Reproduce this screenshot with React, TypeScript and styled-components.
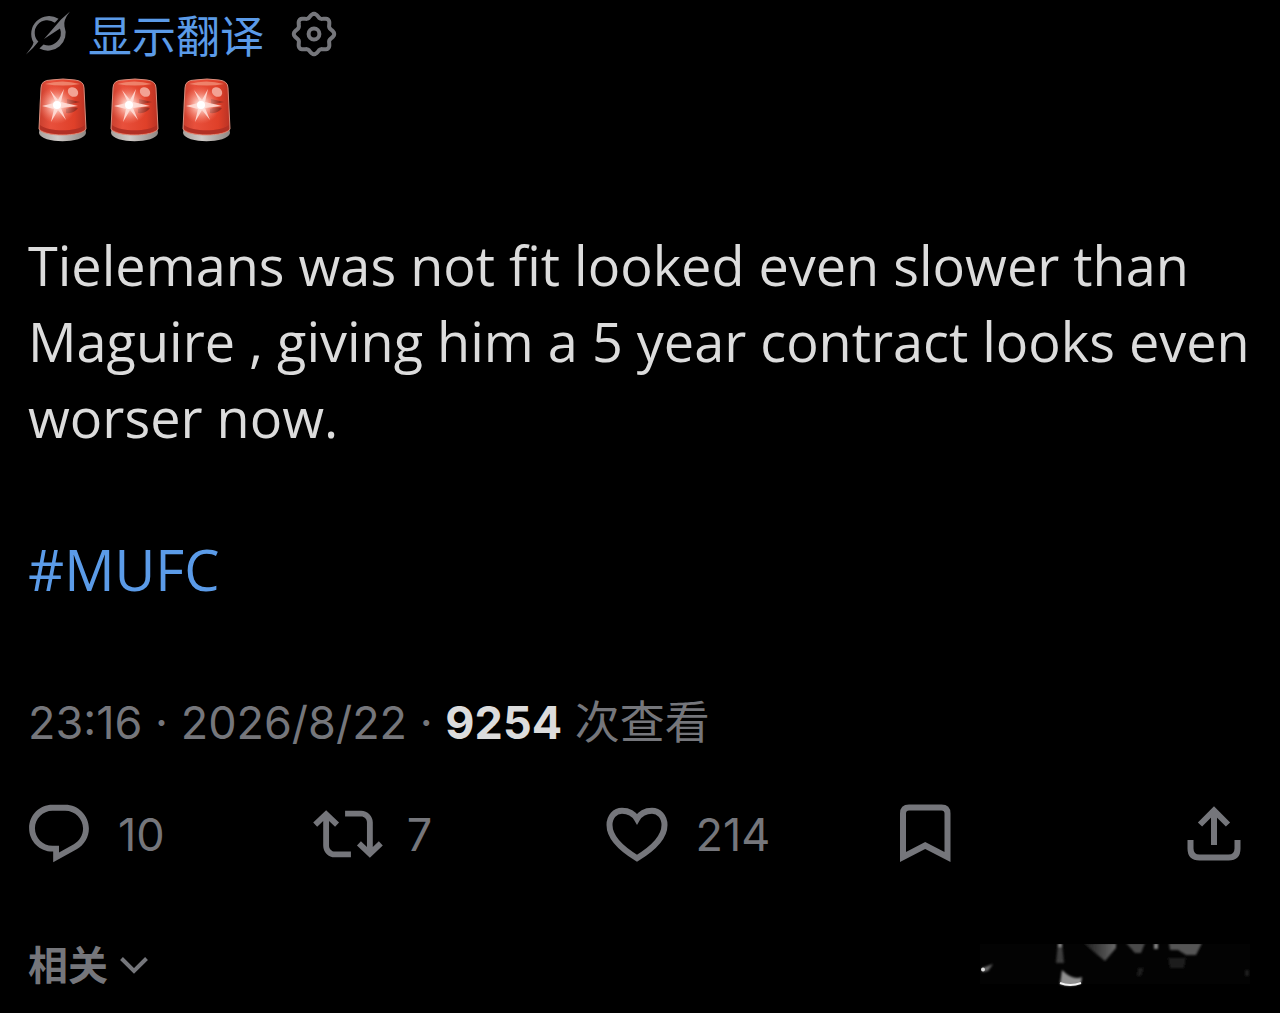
import React from "react";
import styled, { createGlobalStyle } from "styled-components";

const GlobalStyle = createGlobalStyle`
  * { box-sizing: border-box; }
  body { margin: 0; background: #000; }
`;

const latin = `"Open Sans", "Noto Sans CJK SC", sans-serif`;
const numeric = `Inter, "Noto Sans CJK SC", sans-serif`;
const muted = "#75767b";
const accent = "#5b9be8";

const Post = styled.article`
  min-height: 100vh;
  padding: 7px 28px 20px;
  background: #000;
  color: #dcdcdc;
  font-family: ${latin};
`;

const PlainButton = styled.button`
  display: flex;
  align-items: center;
  padding: 0;
  border: 0;
  background: none;
  color: ${muted};
  font: inherit;
  cursor: pointer;
`;

const TranslateBar = styled.header`
  display: flex;
  align-items: center;
  height: 54px;
  margin-left: -4px;
`;

const TranslateButton = styled(PlainButton)`
  margin: 0 26px 0 16px;
  color: ${accent};
  font-family: "Noto Sans CJK SC", sans-serif;
  font-size: 44px;
  line-height: 54px;
`;

const Glyph = styled.svg<{ $size: number }>`
  display: block;
  flex: none;
  width: ${(p) => p.$size}px;
  height: ${(p) => p.$size}px;
  color: ${muted};
`;

const Body = styled.div`
  margin-top: 10px;
  font-size: 54px;
  line-height: 76px;
`;

const Sirens = styled.div`
  display: flex;
  align-items: center;
  gap: 12px;
  height: 76px;
  padding-left: 4px;
`;

const SirenSvg = styled.svg`
  width: 60px;
  height: 68px;
`;

const Paragraph = styled.p`
  margin: 80px 0 76px;
`;

const Hashtag = styled.a`
  display: block;
  width: fit-content;
  color: ${accent};
  font-size: 56px;
  text-decoration: none;
`;

const Meta = styled.div`
  margin-top: 86px;
  color: ${muted};
  font-family: ${numeric};
  font-size: 45px;
  line-height: 60px;
`;

const Views = styled.strong`
  color: #dcdcdc;
  font-weight: 700;
`;

const Actions = styled.div`
  display: grid;
  grid-template-columns: repeat(4, 1fr) 70px;
  margin: 46px 3px 0 -4px;
`;

const Action = styled(PlainButton)`
  gap: 24px;
  height: 70px;
  font-family: ${numeric};
  font-size: 45px;
`;

const Footer = styled.footer`
  display: flex;
  align-items: center;
  justify-content: space-between;
  height: 60px;
  margin-top: 64px;
`;

const SortButton = styled(PlainButton)`
  gap: 10px;
  font-family: "Noto Sans CJK SC", sans-serif;
  font-size: 40px;
  font-weight: 700;
  line-height: 60px;
`;

const Smudge = styled.svg`
  width: 280px;
  height: 50px;
`;

const gearPath = Array.from({ length: 96 }, (_, i) => {
  const a = (i / 96) * Math.PI * 2;
  const r = 18.4 + 1.8 * Math.cos(8 * a);
  return `${i ? "L" : "M"}${(24 + r * Math.sin(a)).toFixed(2)} ${(24 - r * Math.cos(a)).toFixed(2)}`;
}).join("") + "Z";

function Siren() {
  return (
    <SirenSvg viewBox="32 74 60 68" role="img" aria-label="🚨">
      <defs>
        <linearGradient id="dome" x1="0" x2="1">
          <stop offset="0" stopColor="#c93f2e" />
          <stop offset=".25" stopColor="#e8503c" />
          <stop offset=".75" stopColor="#df4029" />
          <stop offset="1" stopColor="#b93224" />
        </linearGradient>
        <linearGradient id="base" x1="0" x2="1">
          <stop offset="0" stopColor="#a9a29e" />
          <stop offset=".4" stopColor="#d0cbc8" />
          <stop offset="1" stopColor="#8e8783" />
        </linearGradient>
        <radialGradient id="glow">
          <stop offset="0" stopColor="#fff" />
          <stop offset=".3" stopColor="#ffd9d0" stopOpacity=".8" />
          <stop offset="1" stopColor="#ff8d78" stopOpacity="0" />
        </radialGradient>
      </defs>
      <path d="M40 127Q39 129 39 132C41 143 84 143 86 132Q86 129 85 127Z" fill="url(#base)" />
      <path d="M41 87Q41 79 51 79Q63 77 75 79Q84 80 84 87L86 128C82 136 43 136 39 128Z" fill="url(#dome)" stroke="#d98e7d" strokeWidth="1" />
      <path d="M40 124C48 131 77 131 85 124V128C78 135 47 135 40 128Z" fill="#b23024" />
      <path d="M45 83Q62 78 80 83Q63 86 45 83Z" fill="#f29a82" opacity=".7" />
      <path d="M67 98L80 101L67 104ZM66 112Q74 113 78 107Q72 105 66 108Z" fill="#8c2c22" opacity=".8" />
      <ellipse cx="73" cy="91" rx="5.500" ry="4.500" fill="#f2a394" transform="rotate(35 73 91)" />
      <circle cx="57" cy="104" r="19" fill="url(#glow)" />
      <path d="M57 104L50 89L58 99L64 88L61 101L78 105L61 107L66 119L58 109L51 121L54 108L42 105L54 102Z" fill="#ffe2dc" opacity=".85" />
      <circle cx="57" cy="104" r="4" fill="#fff" />
    </SirenSvg>
  );
}

export default function App() {
  return (
    <>
      <GlobalStyle />
      <Post>
        <TranslateBar>
          <Glyph $size={48} viewBox="24 11 48 48" fill="currentColor" aria-hidden="true">
            <path d="M58.500 19.800A17.800 17.800 0 0 0 33.500 43.600Q33 47 26 55.500Q33.500 49.500 38.400 42.600A12.500 12.500 0 0 1 54.800 23.800Z" />
            <path d="M70 12.500L61 20.500L44 40L60 29.500A12.500 12.500 0 0 1 43.500 45.400L39.400 49.500A17.800 17.800 0 0 0 64.500 27.500Q63 21 70 12.500Z" />
          </Glyph>
          <TranslateButton>显示翻译</TranslateButton>
          <PlainButton aria-label="翻译设置">
            <Glyph $size={48} viewBox="0 0 48 48" fill="none" stroke="currentColor" strokeWidth="4">
              <path d={gearPath} strokeLinejoin="round" />
              <circle cx="24" cy="24" r="5.4" />
            </Glyph>
          </PlainButton>
        </TranslateBar>
        <Body>
          <Sirens>
            <Siren />
            <Siren />
            <Siren />
          </Sirens>
          <Paragraph>
            Tielemans was not fit looked even slower than
            <br />
            Maguire , giving him a 5 year contract looks even
            <br />
            worser now.
          </Paragraph>
          <Hashtag href="#MUFC">#MUFC</Hashtag>
        </Body>
        <Meta>
          23:16 · 2026/8/22 · <Views>9254</Views> 次查看
        </Meta>
        <Actions>
          <Action aria-label="回复 10">
            <Glyph $size={70} viewBox="0 0 24 24" fill="currentColor">
              <path d="M1.751 10c0-4.42 3.584-8 8.005-8h4.366c4.49 0 8.129 3.64 8.129 8.13 0 2.96-1.607 5.68-4.196 7.11l-8.054 4.46v-3.69h-.067c-4.49.1-8.183-3.51-8.183-8.01zm8.005-6c-3.317 0-6.005 2.69-6.005 6 0 3.37 2.77 6.08 6.138 6.01l.351-.01h1.761v2.3l5.087-2.81c1.951-1.08 3.163-3.13 3.163-5.36 0-3.39-2.744-6.13-6.129-6.13H9.756z" />
            </Glyph>
            10
          </Action>
          <Action aria-label="转帖 7">
            <Glyph $size={70} viewBox="0 0 24 24" fill="currentColor">
              <path d="M4.5 3.88l4.432 4.14-1.364 1.46L5.5 7.55V16c0 1.1.896 2 2 2H13v2H7.5c-2.209 0-4-1.79-4-4V7.55L1.432 9.48.068 8.02 4.5 3.88zM16.5 6H11V4h5.5c2.209 0 4 1.79 4 4v8.45l2.068-1.93 1.364 1.46-4.432 4.14-4.432-4.14 1.364-1.46 2.068 1.93V8c0-1.1-.896-2-2-2z" />
            </Glyph>
            7
          </Action>
          <Action aria-label="喜欢 214">
            <Glyph $size={70} viewBox="0 0 70 70" fill="none" stroke="currentColor" strokeWidth="6">
              <path d="M35 59.2C19 49.5 7.5 38.5 7.5 26C7.5 17.5 13 11.7 20 11.7C26.5 11.7 31.5 14 35 20C38.500 14 43.500 11.700 50 11.700C57 11.700 62.500 17.500 62.500 26C62.500 38.500 51 49.500 35 59.200Z" />
            </Glyph>
            214
          </Action>
          <Action aria-label="书签">
            <Glyph $size={70} viewBox="0 0 70 70" fill="none" stroke="currentColor" strokeWidth="6">
              <path d="M13 58V14.500Q13 8.500 19 8.500H51.500Q57.500 8.500 57.500 14.500V58L35.200 46.500Z" />
            </Glyph>
          </Action>
          <Action aria-label="分享">
            <Glyph $size={70} viewBox="0 0 70 70" fill="none" stroke="currentColor" strokeWidth="6">
              <path d="M35 46V11.500M21 25.500L35 11.500L49 25.500M11.500 41V49.500Q11.500 58.500 20.500 58.500H49.500Q58.500 58.500 58.500 49.500V41" />
            </Glyph>
          </Action>
        </Actions>
        <Footer>
          <SortButton>
            相关
            <Glyph $size={32} viewBox="0 0 32 32" fill="none" stroke="currentColor" strokeWidth="4">
              <path d="M3.500 11.500L16 24L28.500 11.500" />
            </Glyph>
          </SortButton>
          <Smudge viewBox="972 938 280 50" aria-hidden="true">
            <defs>
              <filter id="soft" x="-20%" y="-20%" width="140%" height="140%">
                <feGaussianBlur stdDeviation="1" />
              </filter>
              <clipPath id="strip">
                <rect x="978" y="944" width="274" height="44" />
              </clipPath>
              <linearGradient id="fade" x1="0" y1="0" x2="1" y2="0">
                <stop offset="0" stopColor="#181818" />
                <stop offset="1" stopColor="#686868" />
              </linearGradient>
            </defs>
            <rect x="980" y="944" width="270" height="40" fill="#030303" />
            <g clipPath="url(#strip)">
              <g filter="url(#soft)">
                <path d="M1058 943h4l2 20h-8z" fill="#3c3c3c" />
                <path d="M1058 943h4v4h-4zM1154 943h4v6h-4z" fill="#858585" />
                <path d="M1083 943h33v5l-11 13z" fill="url(#fade)" />
                <path d="M1126 943h19l-4 10h-6z" fill="#4a4a4a" />
                <path d="M1169 943h33l-6 12h-10l-8-5h-8z" fill="#555" />
                <path d="M1168 958h18l-2 10h-14zM1245 970h4v6h-4zM1138 968h6l-3 8h-4z" fill="#1c1c1c" />
                <path d="M1062 970L1060 984Q1071 988 1081 983L1082 977Q1073 981 1062 970Z" fill="#909090" />
                <path d="M982 968L993 964L988 971L982 972Z" fill="#666" />
              </g>
              <path d="M1060 983Q1070 987 1081 983" fill="none" stroke="#f4f4f4" strokeWidth="2" />
              <circle cx="983" cy="969.500" r="2" fill="#ddd" />
            </g>
          </Smudge>
        </Footer>
      </Post>
    </>
  );
}
